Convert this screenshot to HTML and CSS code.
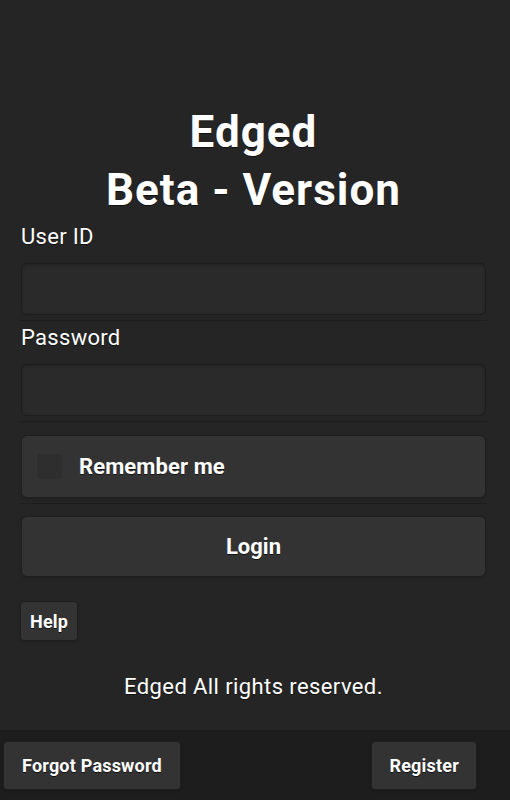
FILE: index.html
```html
<!DOCTYPE html>
<html lang="en">
<head>
<meta charset="utf-8">
<title>Edged</title>
<link rel="stylesheet" href="styles.css">
</head>
<body>
<div class="page">
  <main class="content">
    <h1 class="title">Edged<br>Beta - Version</h1>
    <div class="field">
      <label class="label" for="uid">User ID</label>
      <input class="input" id="uid" type="text">
    </div>
    <div class="field">
      <label class="label" for="pwd">Password</label>
      <input class="input" id="pwd" type="password">
    </div>
    <div class="field field-check">
      <label class="btn check-btn"><span class="checkbox"></span><span>Remember me</span></label>
    </div>
    <div class="login-wrap">
      <button class="btn login-btn" type="button">Login</button>
    </div>
    <div class="help-wrap">
      <button class="btn small-btn" type="button">Help</button>
    </div>
    <p class="copyright">Edged All rights reserved.</p>
  </main>
  <footer class="footer">
    <button class="btn small-btn foot-btn" type="button">Forgot Password</button>
    <button class="btn small-btn foot-btn foot-reg" type="button">Register</button>
  </footer>
</div>
</body>
</html>
```
FILE: styles.css
```css
* { box-sizing: border-box; }
html, body { margin: 0; padding: 0; }
body {
  background: #252525;
  color: #fff;
  font-family: Roboto, "Noto Sans", "Liberation Sans", sans-serif;
  text-shadow: 0 1px 0 #111;
}
.page {
  min-height: 100vh;
  display: flex;
  flex-direction: column;
}
.content {
  flex: 1;
  padding: 0 23px 0 20px;
}
.title {
  margin: 103px 0 1px;
  font-size: 44px;
  line-height: 58px;
  letter-spacing: 1px;
  font-weight: 700;
  text-align: center;
}
.field {
  padding-top: 3px;
  padding-bottom: 5px;
  border-bottom: 1px solid #1e1e1e;
}
.label {
  display: block;
  font-size: 22px;
  line-height: 28px;
  letter-spacing: 0.3px;
  margin: 0 1px 12px;
}
.input {
  display: block;
  width: calc(100% - 2px);
  margin: 0 1px;
  height: 52px;
  background: #2a2a2a;
  border: 1px solid #1d1d1d;
  border-radius: 6px;
  box-shadow: inset 0 1px 3px rgba(0,0,0,.2);
  color: #fff;
  font: inherit;
  font-size: 20px;
  padding: 0 12px;
  outline: none;
}
.btn {
  background: #333;
  border: 1px solid #1f1f1f;
  border-radius: 6px;
  box-shadow: 0 1px 3px rgba(0,0,0,.15);
  color: #fff;
  font-family: inherit;
  font-weight: 700;
  text-shadow: 0 1px 0 #111;
  cursor: pointer;
}
.field-check {
  padding-top: 13px;
}
.check-btn {
  display: flex;
  align-items: center;
  height: 63px;
  margin: 0 1px;
  padding-left: 15px;
  font-size: 22px;
  letter-spacing: 0.1px;
}
.checkbox {
  width: 25px;
  height: 25px;
  border-radius: 4px;
  background: #2e2e2e;
  margin-right: 17px;
}
.login-wrap {
  padding-top: 12px;
}
.login-btn {
  display: block;
  width: calc(100% - 2px);
  margin: 0 1px;
  height: 61px;
  font-size: 22px;
}
.help-wrap {
  padding-top: 24px;
}
.small-btn {
  height: 40px;
  padding: 0 9px;
  margin: 0;
  font-size: 18px;
  letter-spacing: 0.2px;
  border-radius: 4px;
}
.copyright {
  margin: 32px 0 0;
  font-size: 22px;
  line-height: 28px;
  letter-spacing: 0.4px;
  text-align: center;
}
.footer {
  height: 70px;
  background: #1d1d1d;
  border-top: 1px solid #1b1b1b;
  display: flex;
  justify-content: space-between;
  align-items: flex-start;
  padding: 10px 33px 0 3px;
}
.foot-btn {
  height: 49px;
  padding: 0 18px 1px;
}
.foot-reg {
  padding: 0 17px 1px;
}
```
